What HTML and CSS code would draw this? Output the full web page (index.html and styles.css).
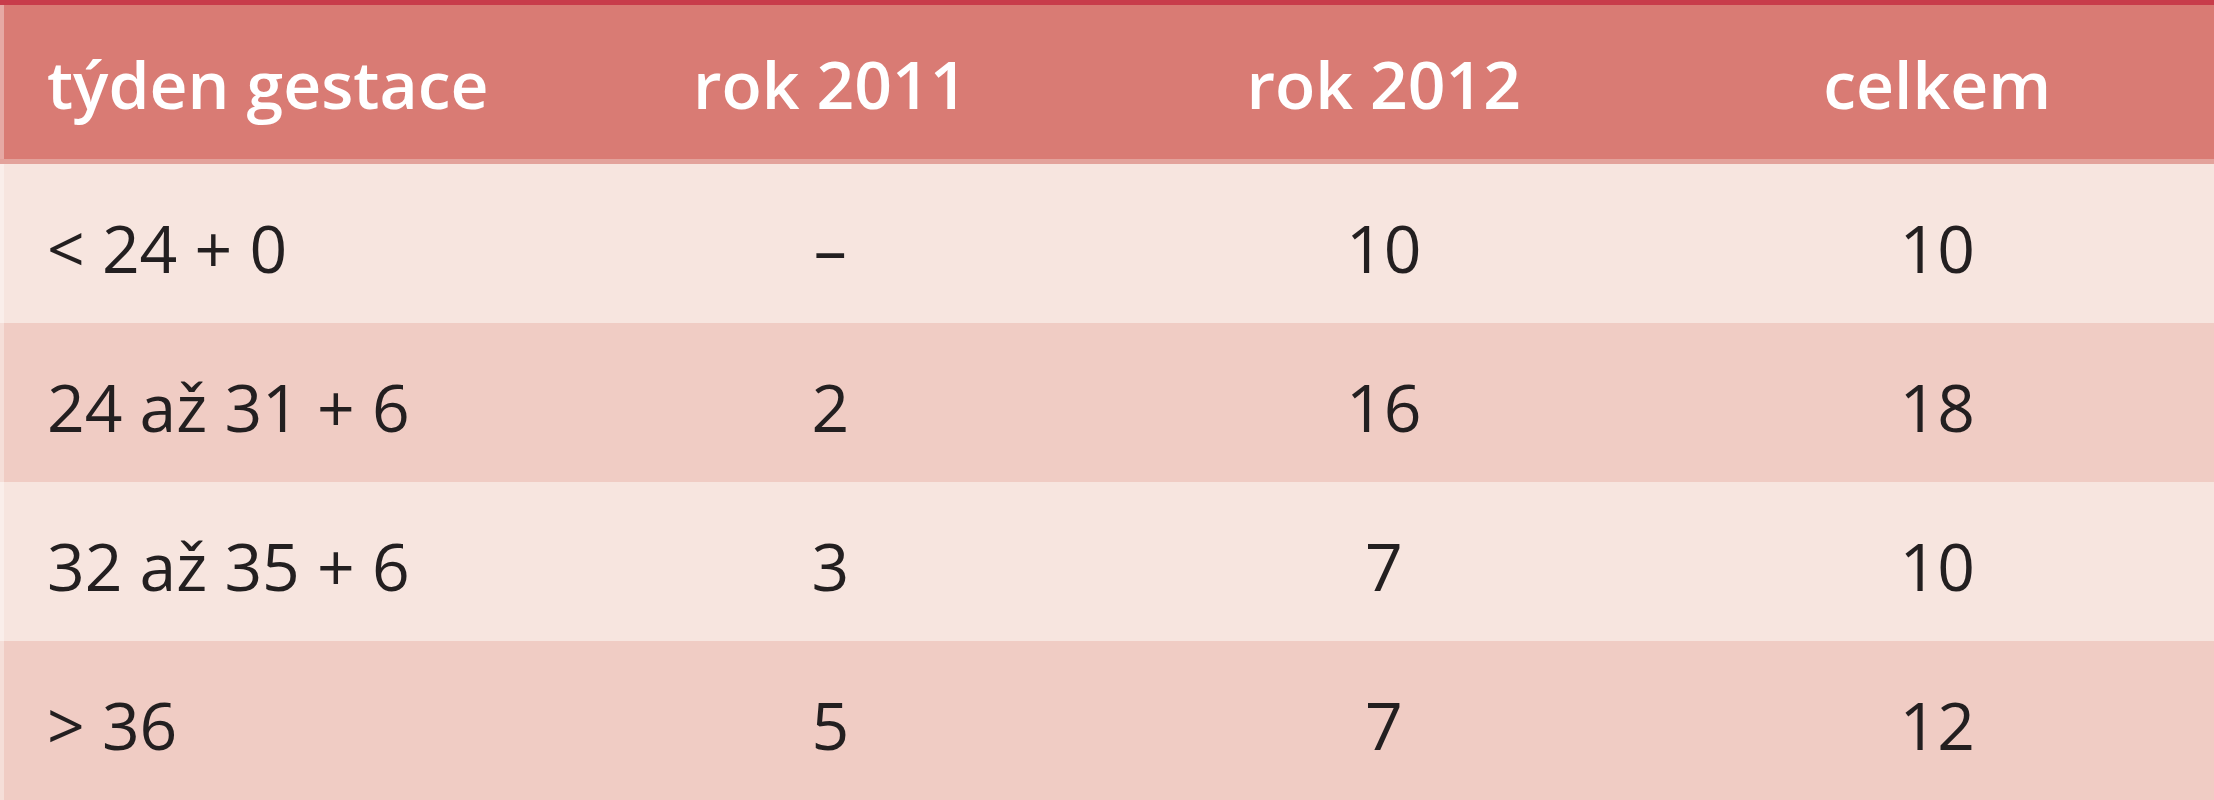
FILE: index.html
```html
<!DOCTYPE html>
<html lang="cs">
<head>
<meta charset="utf-8">
<title>Tabulka</title>
<link rel="stylesheet" href="styles.css">
</head>
<body>
<div class="table">
  <div class="row head">
    <div class="cell first">týden gestace</div>
    <div class="cell">rok 2011</div>
    <div class="cell">rok 2012</div>
    <div class="cell">celkem</div>
  </div>
  <div class="row odd">
    <div class="cell first">&lt; 24 + 0</div>
    <div class="cell">–</div>
    <div class="cell">10</div>
    <div class="cell">10</div>
  </div>
  <div class="row even">
    <div class="cell first">24 až 31 + 6</div>
    <div class="cell">2</div>
    <div class="cell">16</div>
    <div class="cell">18</div>
  </div>
  <div class="row odd">
    <div class="cell first">32 až 35 + 6</div>
    <div class="cell">3</div>
    <div class="cell">7</div>
    <div class="cell">10</div>
  </div>
  <div class="row even">
    <div class="cell first">&gt; 36</div>
    <div class="cell">5</div>
    <div class="cell">7</div>
    <div class="cell">12</div>
  </div>
</div>
</body>
</html>
```
FILE: styles.css
```css
html, body {
  margin: 0;
  padding: 0;
  background: #f0ccc4;
}

body {
  width: 2214px;
  height: 800px;
  overflow: hidden;
  font-family: "Open Sans", "Noto Sans", sans-serif;
  font-size: 66px;
  color: #231f20;
}

.table {
  display: flex;
  flex-direction: column;
  border-top: 5px solid #c83c4a;
}

.row {
  display: grid;
  grid-template-columns: repeat(4, 1fr);
  height: 159px;
  box-shadow: inset 4px 0 0 rgba(255, 255, 255, 0.35);
}

.row.head {
  height: 154px;
  background: #d97b74;
  color: #ffffff;
  font-weight: 600;
  border-bottom: 5px solid #e3a29b;
}

.row.odd {
  background: #f7e5df;
}

.row.even {
  background: #f0ccc4;
}

.cell {
  text-align: center;
  line-height: 151px;
  padding-top: 8px;
  white-space: nowrap;
}

.head .cell {
  line-height: 152px;
  padding-top: 2px;
}

.cell.first {
  text-align: left;
  padding-left: 47px;
}
```
